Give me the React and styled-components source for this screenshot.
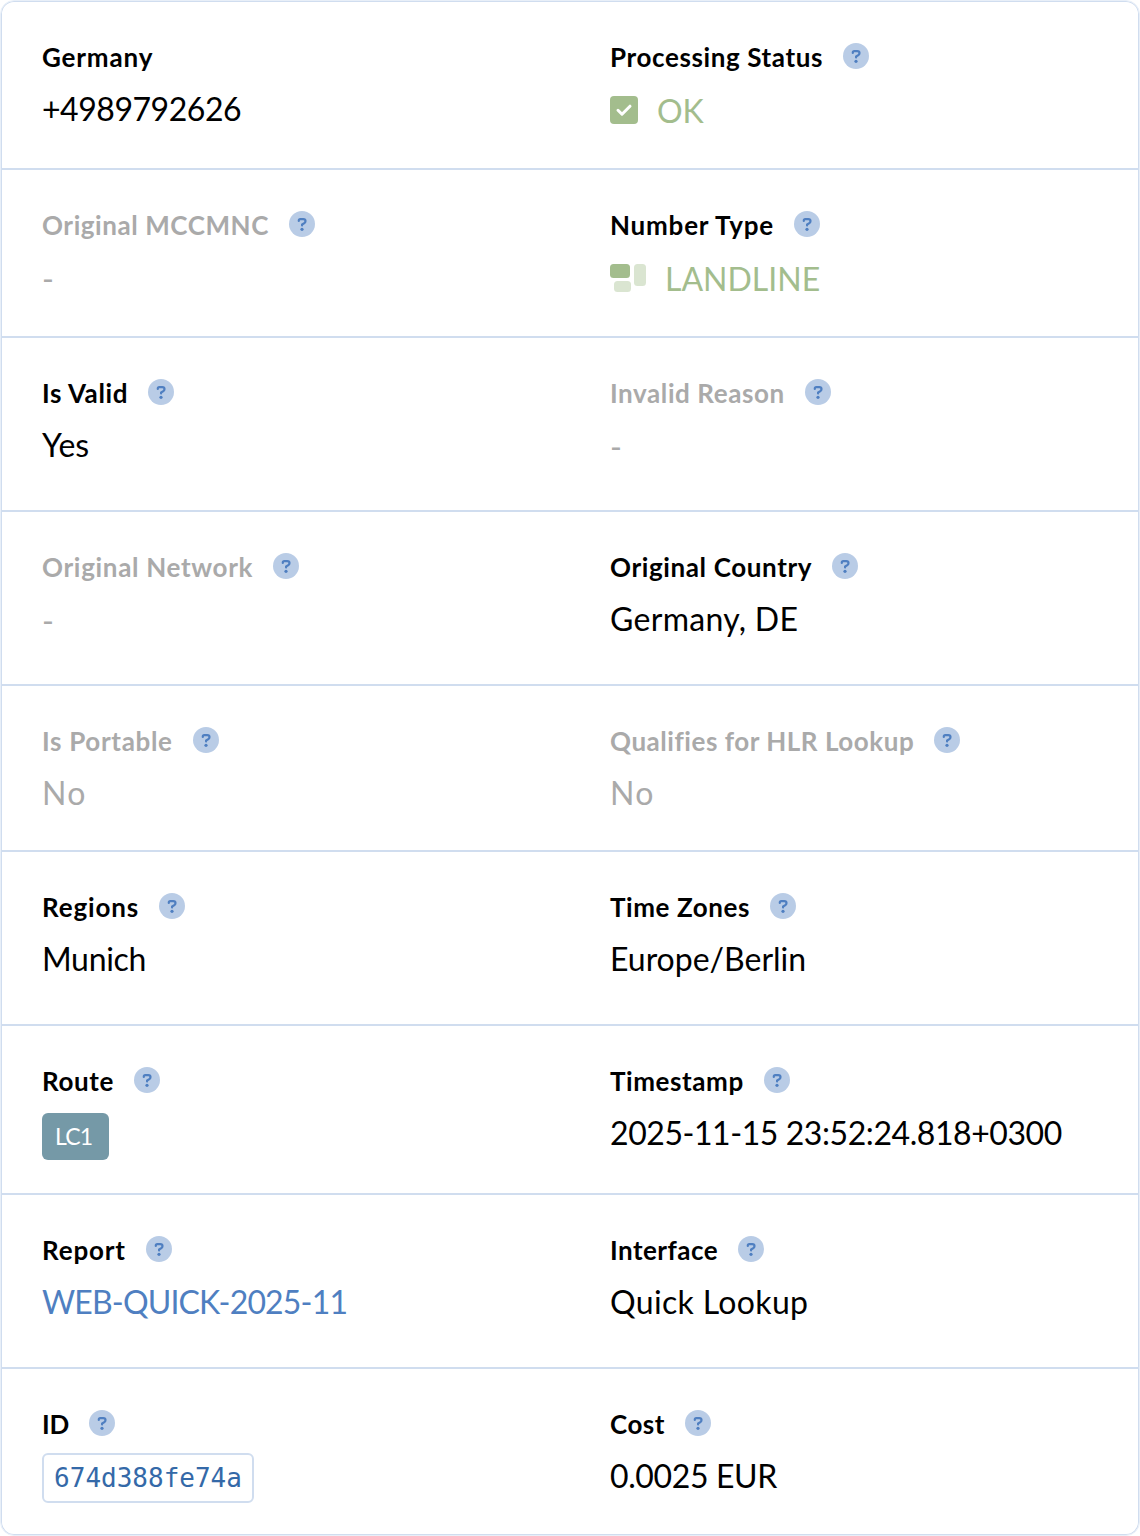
import React from 'react';
import styled, { createGlobalStyle } from 'styled-components';

const GlobalStyle = createGlobalStyle`
  * {
    box-sizing: border-box;
  }

  body {
    margin: 0;
    background: #ffffff;
    font-family: Lato, 'Liberation Sans', sans-serif;
  }
`;

const Card = styled.main`
  width: 1140px;
  height: 1536px;
  padding: 1px;
  border: 1px solid #e8eff8;
  border-radius: 14px;
  box-shadow: inset 0 0 0 1px #d0ddef;
`;

const Row = styled.section`
  display: grid;
  grid-template-columns: 568px 1fr;
  height: ${({ $height }) => $height}px;
  padding: 35px 0 0 40px;

  & + & {
    border-top: 2px solid #d0ddef;
  }
`;

const Field = styled.div`
  color: ${({ $muted }) => ($muted ? '#aaaaaa' : '#000000')};
`;

const LabelLine = styled.div`
  display: flex;
  align-items: center;
  gap: 20px;
  height: 38px;
`;

const Label = styled.span`
  padding-top: 2px;
  font-size: 26px;
  font-weight: 700;
  line-height: 36px;
  letter-spacing: ${({ $tracking }) => $tracking || 0}px;
  white-space: nowrap;
`;

const HelpDot = styled.svg`
  flex: none;
  width: 26px;
  height: 26px;
`;

const Value = styled.div`
  display: flex;
  align-items: center;
  height: 48px;
  margin-top: 10px;
  font-size: 32px;
  line-height: 48px;
  letter-spacing: ${({ $tracking }) => $tracking || 0}px;
  white-space: nowrap;
`;

const EmptyValue = styled(Value)`
  margin-top: 12px;
`;

const StatusValue = styled(Value)`
  gap: 19px;
  margin-top: 12px;
  color: #a3bd8d;

  svg {
    flex: none;
    margin-bottom: 2px;
  }
`;

const ReportLink = styled.a`
  color: #4f7fc1;
  text-decoration: none;
`;

const RouteBadge = styled.div`
  width: 67px;
  height: 47px;
  margin-top: 14px;
  padding-left: 13px;
  border-radius: 6px;
  background: #7599a7;
  color: #ffffff;
  font-size: 23px;
  line-height: 46px;
  letter-spacing: -0.8px;
`;

const IdBox = styled.div`
  display: flex;
  align-items: center;
  justify-content: center;
  width: 212px;
  height: 50px;
  margin-top: 11px;
  border: 2px solid #d0ddef;
  border-radius: 6px;
  color: #3469a8;
  font-family: 'DejaVu Sans Mono', monospace;
  font-size: 26px;
`;

function Help() {
  return (
    <HelpDot viewBox="0 0 26 26" fill="none">
      <circle cx="13" cy="13" r="13" fill="#b9cce6" />
      <path
        d="M9.8 10V9.6Q9.8 8.1 11.3 8.1H14.3Q16.5 8.1 16.5 10.1Q16.5 11.4 15.4 12.1L13.1 13.5V14.4"
        stroke="#4f7fc1"
        strokeWidth="2.2"
        strokeLinecap="round"
        strokeLinejoin="round"
      />
      <circle cx="13" cy="18.3" r="1.6" fill="#4f7fc1" />
    </HelpDot>
  );
}

function CheckIcon() {
  return (
    <svg width="28" height="28" viewBox="0 0 28 28" fill="none">
      <rect width="28" height="28" rx="4" fill="#a3bd8d" />
      <path
        d="M8 14.3L12 18.2L20 10.2"
        stroke="#ffffff"
        strokeWidth="3"
        strokeLinecap="round"
        strokeLinejoin="round"
      />
    </svg>
  );
}

function LandlineIcon() {
  return (
    <svg width="36" height="28" viewBox="0 0 36 28">
      <rect width="20" height="14" rx="3.5" fill="#a3bd8d" />
      <rect x="24" width="12" height="22" rx="3.5" fill="#dae5d1" />
      <rect x="4" y="17" width="17" height="11" rx="3.5" fill="#dae5d1" />
    </svg>
  );
}

const rows = [
  {
    height: 166,
    fields: [
      { label: 'Germany', tracking: 0.85, noHelp: true, value: '+4989792626', valueTracking: -0.46 },
      { label: 'Processing Status', tracking: 0.61, kind: 'ok', value: 'OK' },
    ],
  },
  {
    height: 168,
    fields: [
      { label: 'Original MCCMNC', tracking: 0.57, muted: true, kind: 'empty', value: '-' },
      { label: 'Number Type', tracking: 0.79, kind: 'landline', value: 'LANDLINE' },
    ],
  },
  {
    height: 174,
    fields: [
      { label: 'Is Valid', tracking: 0.6, value: 'Yes' },
      { label: 'Invalid Reason', tracking: 0.59, muted: true, kind: 'empty', value: '-' },
    ],
  },
  {
    height: 174,
    fields: [
      { label: 'Original Network', tracking: 0.68, muted: true, kind: 'empty', value: '-' },
      { label: 'Original Country', tracking: 0.62, value: 'Germany, DE', valueTracking: 0.3 },
    ],
  },
  {
    height: 166,
    fields: [
      { label: 'Is Portable', tracking: 0.68, muted: true, value: 'No', valueTracking: 1.4 },
      { label: 'Qualifies for HLR Lookup', tracking: 0.54, muted: true, value: 'No', valueTracking: 1.4 },
    ],
  },
  {
    height: 174,
    fields: [
      { label: 'Regions', tracking: 0.84, value: 'Munich', valueTracking: -0.3 },
      { label: 'Time Zones', tracking: 0.58, value: 'Europe/Berlin' },
    ],
  },
  {
    height: 169,
    fields: [
      { label: 'Route', tracking: 0.62, kind: 'route', value: 'LC1' },
      { label: 'Timestamp', tracking: 0.58, value: '2025-11-15 23:52:24.818+0300', valueTracking: -0.43 },
    ],
  },
  {
    height: 174,
    fields: [
      { label: 'Report', tracking: 0.83, kind: 'link', value: 'WEB-QUICK-2025-11', valueTracking: -0.82 },
      { label: 'Interface', tracking: 0.47, value: 'Quick Lookup', valueTracking: 0.35 },
    ],
  },
  {
    height: 167,
    fields: [
      { label: 'ID', tracking: -0.2, kind: 'id', value: '674d388fe74a' },
      { label: 'Cost', tracking: 0.5, value: '0.0025 EUR', valueTracking: -0.38 },
    ],
  },
];

function FieldValue({ kind, value, tracking }) {
  switch (kind) {
    case 'ok':
      return <StatusValue><CheckIcon />{value}</StatusValue>;
    case 'landline':
      return <StatusValue><LandlineIcon />{value}</StatusValue>;
    case 'empty':
      return <EmptyValue>{value}</EmptyValue>;
    case 'route':
      return <RouteBadge>{value}</RouteBadge>;
    case 'id':
      return <IdBox>{value}</IdBox>;
    case 'link':
      return <Value $tracking={tracking}><ReportLink href="#">{value}</ReportLink></Value>;
    default:
      return <Value $tracking={tracking}>{value}</Value>;
  }
}

export default function App() {
  return (
    <>
      <GlobalStyle />
      <Card>
        {rows.map((row) => (
          <Row key={row.fields[0].label} $height={row.height}>
            {row.fields.map((field) => (
              <Field key={field.label} $muted={field.muted}>
                <LabelLine>
                  <Label $tracking={field.tracking}>{field.label}</Label>
                  {!field.noHelp && <Help />}
                </LabelLine>
                <FieldValue kind={field.kind} value={field.value} tracking={field.valueTracking} />
              </Field>
            ))}
          </Row>
        ))}
      </Card>
    </>
  );
}
